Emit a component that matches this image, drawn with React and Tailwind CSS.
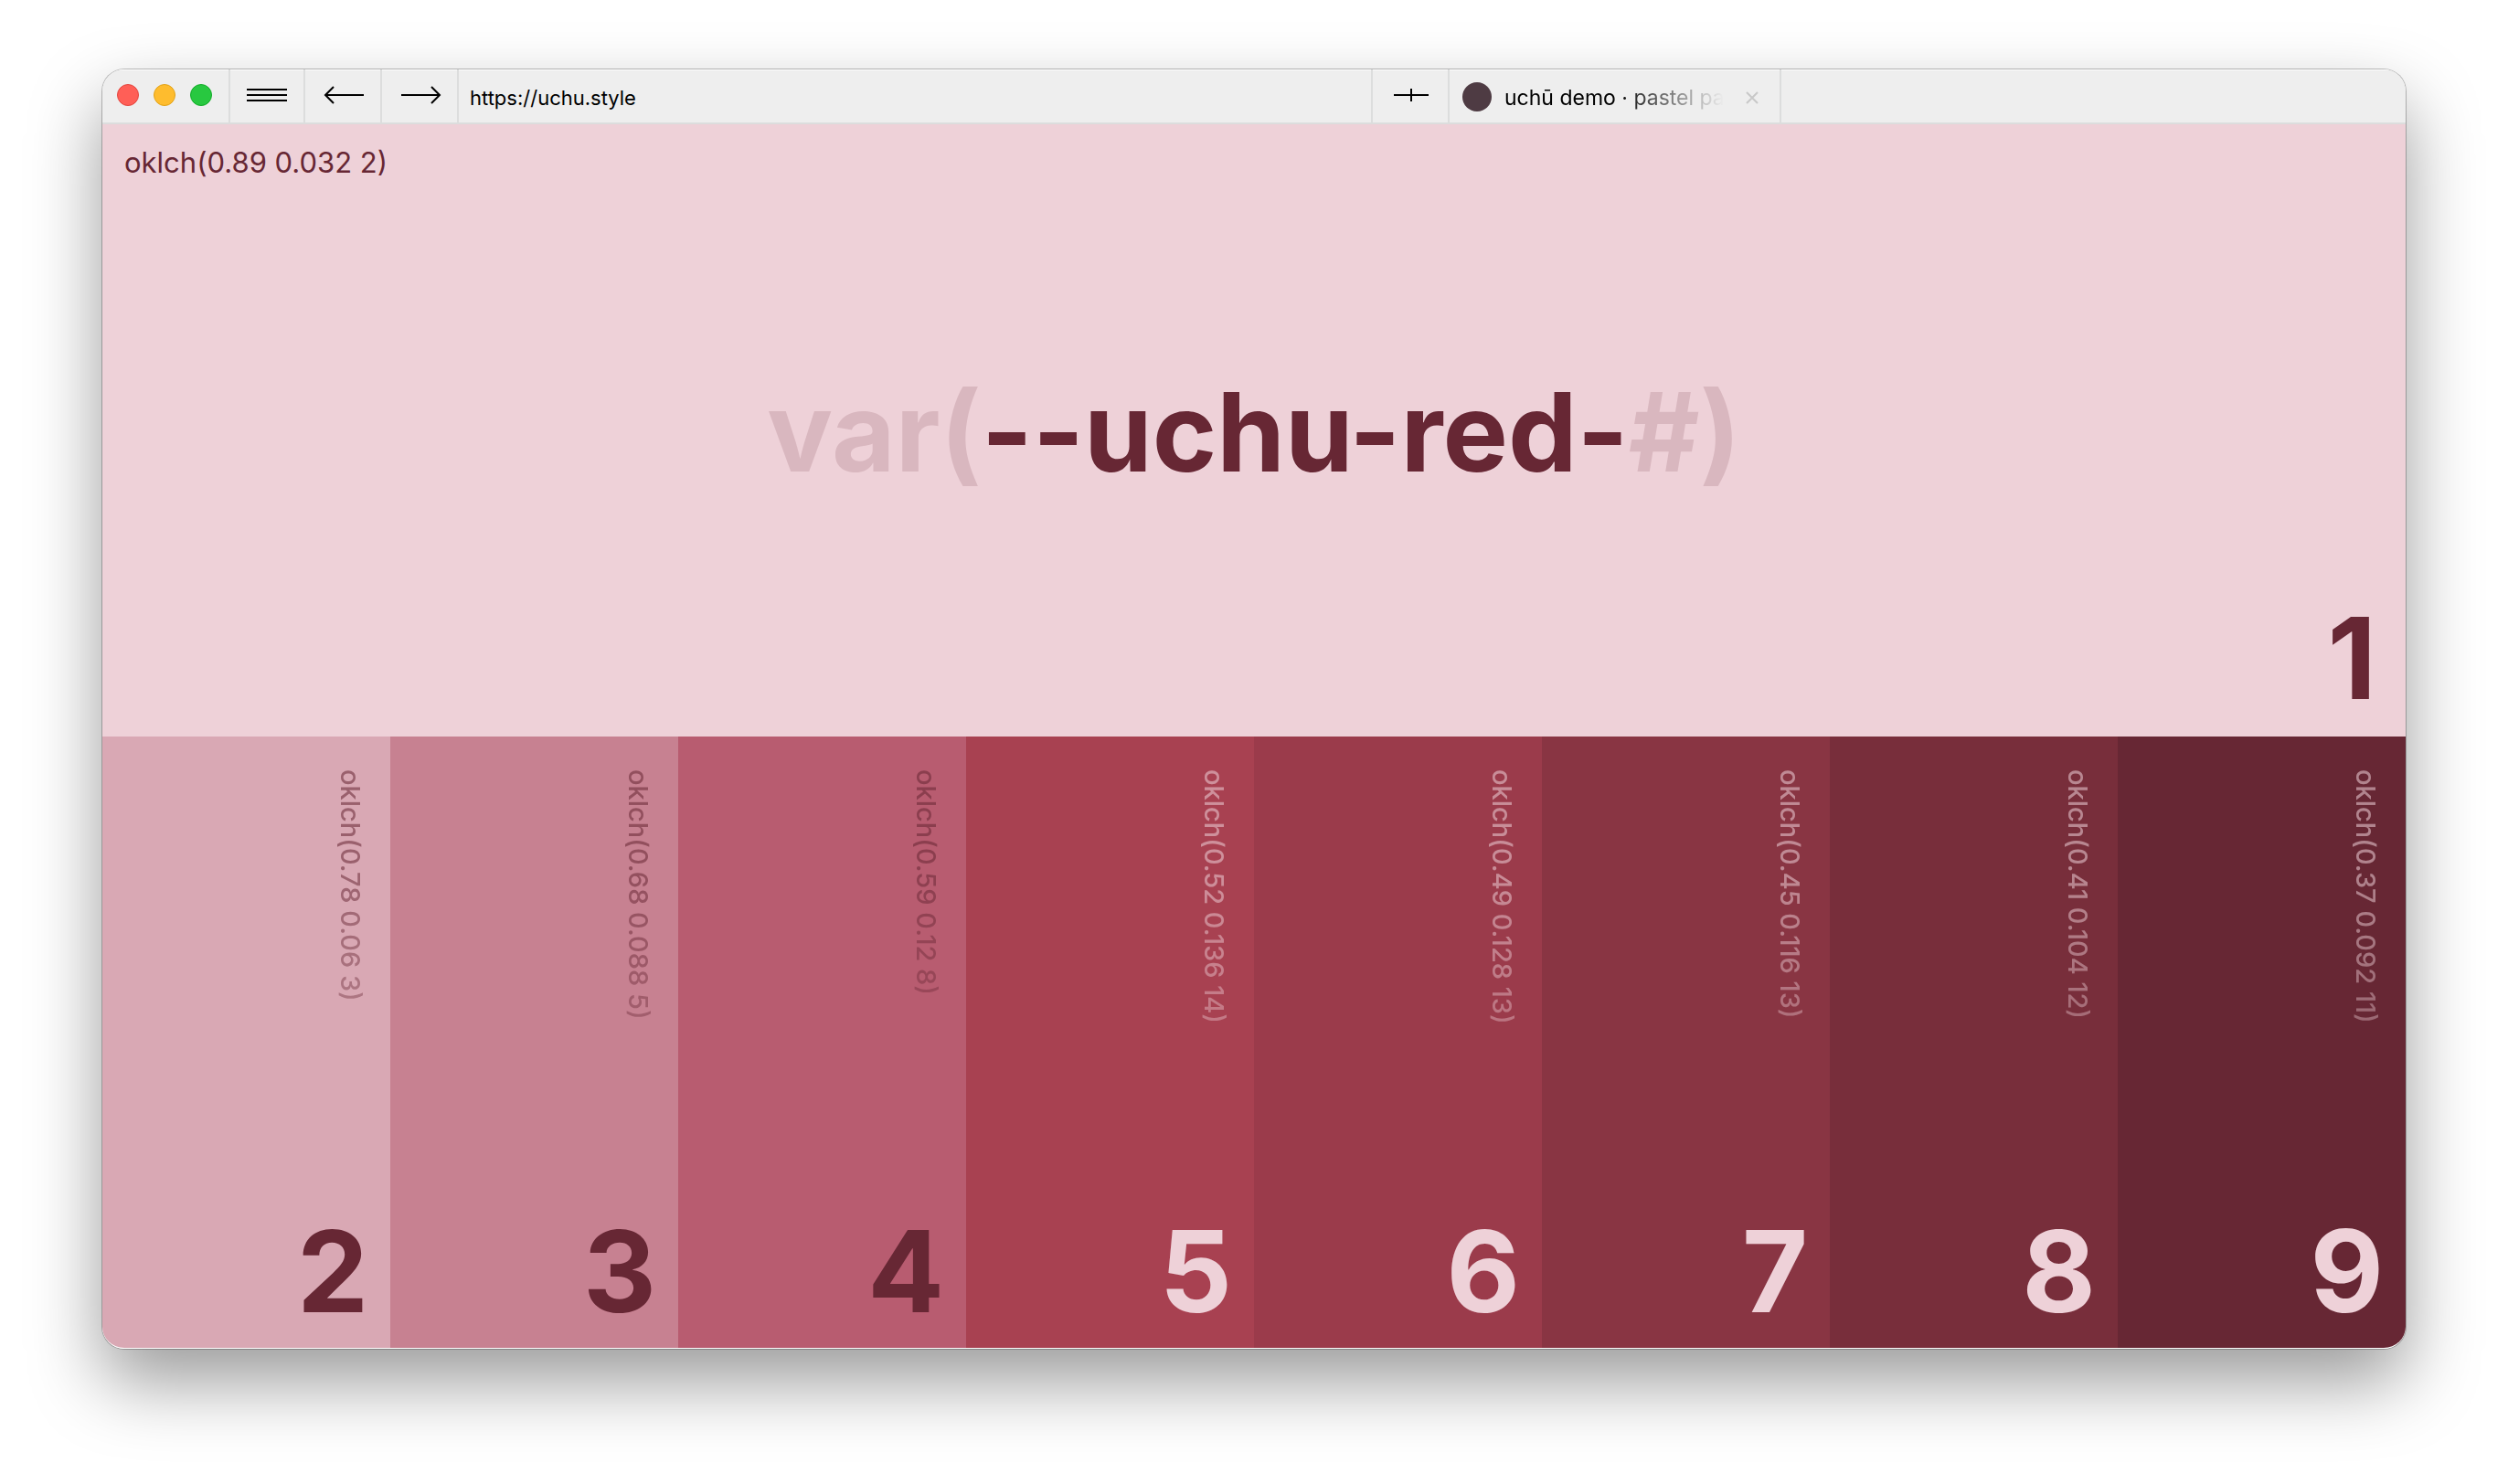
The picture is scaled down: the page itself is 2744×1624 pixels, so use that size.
const swatches = [
  { step: 2, value: 'oklch(0.78 0.06 3)', bg: 'bg-[oklch(0.78_0.06_3)]', light: false },
  { step: 3, value: 'oklch(0.68 0.088 5)', bg: 'bg-[oklch(0.68_0.088_5)]', light: false },
  { step: 4, value: 'oklch(0.59 0.12 8)', bg: 'bg-[oklch(0.59_0.12_8)]', light: false },
  { step: 5, value: 'oklch(0.52 0.136 14)', bg: 'bg-[oklch(0.52_0.136_14)]', light: true },
  { step: 6, value: 'oklch(0.49 0.128 13)', bg: 'bg-[oklch(0.49_0.128_13)]', light: true },
  { step: 7, value: 'oklch(0.45 0.116 13)', bg: 'bg-[oklch(0.45_0.116_13)]', light: true },
  { step: 8, value: 'oklch(0.41 0.104 12)', bg: 'bg-[oklch(0.41_0.104_12)]', light: true },
  { step: 9, value: 'oklch(0.37 0.092 11)', bg: 'bg-[oklch(0.37_0.092_11)]', light: true },
];

function Icon({ d }) {
  return (
    <svg viewBox="0 0 48 24" className="h-6 w-12" fill="none" stroke="#000" strokeWidth="2" aria-hidden="true">
      <path d={d} />
    </svg>
  );
}

function ToolButton({ label, d, width }) {
  return (
    <button
      type="button"
      aria-label={label}
      className={`flex shrink-0 items-center justify-center border-r-2 border-[#dcdddd] ${width}`}
    >
      <Icon d={d} />
    </button>
  );
}

function Toolbar() {
  return (
    <header className="flex h-15 shrink-0 border-b-2 border-[#dcdddd] bg-[#eeeeee] text-[22px] leading-7 text-black shadow-[inset_0_1px_0_#ffffff]">
      <div className="flex w-35 shrink-0 items-center gap-4 border-r-2 border-[#dcdddd] pb-0.5 pl-4">
        <button type="button" aria-label="Close window" className="size-6 rounded-full border border-[#e2463f] bg-[#ff5f57]" />
        <button type="button" aria-label="Minimise window" className="size-6 rounded-full border border-[#e1a116] bg-[#febc2e]" />
        <button type="button" aria-label="Zoom window" className="size-6 rounded-full border border-[#12ac28] bg-[#28c840]" />
      </div>
      <ToolButton label="Menu" width="w-[82px]" d="M2 5h44M2 11h44M2 17h44" />
      <ToolButton label="Back" width="w-21" d="M5 11h42M14 2L5 11L14 20" />
      <ToolButton label="Forward" width="w-21" d="M4 11h42M37 2L46 11L37 20" />
      <input
        aria-label="Address"
        defaultValue="https://uchu.style"
        className="min-w-0 flex-1 border-r-2 border-[#dcdddd] bg-transparent px-3 pt-1 outline-none"
      />
      <ToolButton label="New tab" width="w-21" d="M6 11h38M25 4v14" />
      <div className="flex w-[363px] shrink-0 items-center border-r-2 border-[#dcdddd] pt-0.5 pl-3.5">
        <span className="size-8 shrink-0 rounded-full bg-[#4e3b43]" />
        <span className="ml-3.5 w-60 pt-0.5 text-[23px] whitespace-nowrap [mask-image:linear-gradient(to_right,#000_50%,transparent)]">
          uchū demo · pastel pa
        </span>
        <button type="button" aria-label="Close tab" className="ml-6 pt-0.5">
          <svg viewBox="0 0 14 14" className="size-3.5" fill="none" stroke="#c8c8c8" strokeWidth="2" aria-hidden="true">
            <path d="M1 1l12 12M13 1L1 13" />
          </svg>
        </button>
      </div>
      <div className="w-[683px] shrink-0" />
    </header>
  );
}

function Swatch({ step, value, bg, light }) {
  return (
    <li
      className={`flex flex-1 flex-col items-end justify-between pt-9 pr-6 pb-[22px] ${bg} ${
        light ? 'text-[#eed1d8]' : 'text-[oklch(0.37_0.092_11)]'
      }`}
    >
      <span className="text-[29px] leading-10 font-medium opacity-55 [writing-mode:vertical-rl] [mask-image:linear-gradient(to_bottom,#000_40%,#000000b0)]">
        {value}
      </span>
      <span className="text-[124px] leading-none font-bold">{step}</span>
    </li>
  );
}

export default function App() {
  return (
    <div className="flex min-h-screen flex-col bg-white px-28 pt-19 pb-37 font-['Inter',sans-serif]">
      <main className="flex flex-1 flex-col overflow-hidden rounded-3xl border-b border-white shadow-[0_0_0_1px_rgba(0,0,0,0.25),0_36px_80px_rgba(0,0,0,0.4)]">
        <Toolbar />
        <section className="grid grow basis-[0px] bg-[#eed1d8] text-[oklch(0.37_0.092_11)]">
          <span className="self-start justify-self-start pt-[22px] pl-6 text-[31px] leading-10 [grid-area:1/1]">
            oklch(0.89 0.032 2)
          </span>
          <h1 className="self-center justify-self-center pt-1 text-[120px] leading-none font-bold [grid-area:1/1]">
            <span className="opacity-15">var(</span>--uchu-red-<span className="opacity-15">#)</span>
          </h1>
          <span className="self-end justify-self-end pr-8 pb-6 text-[124px] leading-none font-bold [grid-area:1/1]">1</span>
        </section>
        <ul className="flex grow basis-[0px]">
          {swatches.map((s) => (
            <Swatch key={s.step} {...s} />
          ))}
        </ul>
      </main>
    </div>
  );
}
